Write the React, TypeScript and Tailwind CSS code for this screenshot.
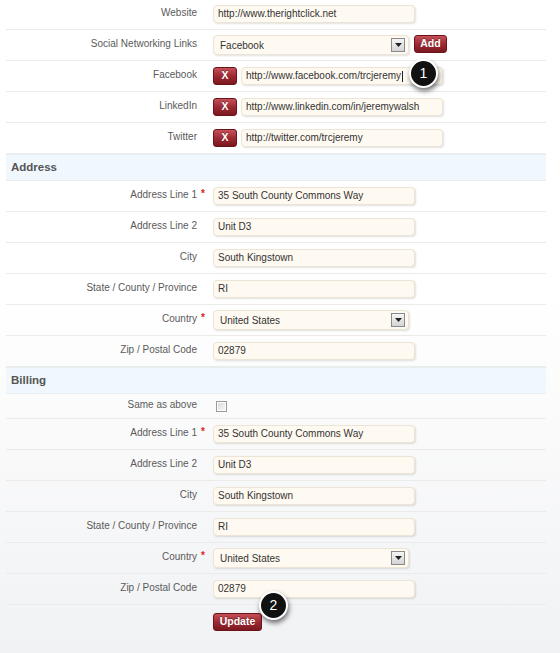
import React from 'react'

const inputCls =
  'h-[18px] w-[202px] rounded-[4px] border border-[#ece5d6] bg-[#fffaf1] px-[4px] text-[10px] leading-[16px] text-[#333] shadow-[1px_1px_2px_rgba(0,0,0,0.12)] outline-none'

function Row({
  label,
  required,
  children,
  h = 'h-[31px]',
}: {
  label: string
  required?: boolean
  children: React.ReactNode
  h?: string
}) {
  return (
    <div className={`flex items-center border-b border-[#ebebeb] ${h}`}>
      <span className="w-[191px] shrink-0 pb-[3px] text-right text-[10px] text-[#5a5a5a]">{label}</span>
      <span className="w-[16px] shrink-0 pb-[5px] pl-[4px] text-[10px] font-bold text-[#d22]">
        {required ? '*' : ''}
      </span>
      <div className="flex items-center">{children}</div>
    </div>
  )
}

function Section({ title }: { title: string }) {
  return (
    <div className="flex h-[27px] items-center border-y border-[#e6eef2] bg-[#f0f8fd] px-[5px] text-[11.5px] font-bold text-[#555]">
      {title}
    </div>
  )
}

function TextInput({ value, cursor }: { value: string; cursor?: boolean }) {
  return (
    <div className={`${inputCls} flex items-center`}>
      <span>{value}</span>
      {cursor && <span className="ml-[1px] h-[11px] w-px bg-[#222]" />}
    </div>
  )
}

function Select({ value }: { value: string }) {
  return (
    <div className="flex h-[20px] w-[196px] items-center justify-between rounded-[4px] border border-[#ece5d6] bg-[#fffaf1] pl-[6px] pr-[3px] text-[10px] text-[#333] shadow-[1px_1px_2px_rgba(0,0,0,0.12)]">
      <span>{value}</span>
      <span className="flex h-[14px] w-[14px] items-center justify-center border border-[#8a8a8a] bg-linear-to-b from-[#f6f6f6] to-[#d4d4d4]">
        <svg width="7" height="4" viewBox="0 0 7 4">
          <path d="M0 0h7L3.5 4z" fill="#222" />
        </svg>
      </span>
    </div>
  )
}

function RedButton({ children, w }: { children: React.ReactNode; w: string }) {
  return (
    <button
      className={`flex h-[18px] ${w} items-center justify-center rounded-[3px] border border-[#6e1219] bg-linear-to-b from-[#c4505a] via-[#9e2a33] to-[#7b1820] text-[10.5px] font-bold text-white [text-shadow:0_-1px_0_rgba(0,0,0,0.35)]`}
    >
      {children}
    </button>
  )
}

function Badge({ n, className }: { n: number; className: string }) {
  return (
    <div
      className={`absolute flex h-[29px] w-[29px] items-center justify-center rounded-full border-2 border-white bg-[#111] text-[14px] text-white shadow-[1px_3px_5px_rgba(0,0,0,0.55)] ${className}`}
    >
      {n}
    </div>
  )
}

function AddressFields() {
  return (
    <>
      <Row label="Address Line 1" required>
        <TextInput value="35 South County Commons Way" />
      </Row>
      <Row label="Address Line 2">
        <TextInput value="Unit D3" />
      </Row>
      <Row label="City">
        <TextInput value="South Kingstown" />
      </Row>
      <Row label="State / County / Province">
        <TextInput value="RI" />
      </Row>
      <Row label="Country" required>
        <Select value="United States" />
      </Row>
      <Row label="Zip / Postal Code">
        <TextInput value="02879" />
      </Row>
    </>
  )
}

export default function App() {
  return (
    <div className="relative h-[653px] w-[560px] overflow-hidden bg-linear-to-b from-white via-white via-45% to-[#f1f2f4] font-['Liberation_Sans',Arial,sans-serif]">
      <div className="-mt-[1px] ml-[6px] w-[540px]">
        <Row label="Website">
          <TextInput value="http://www.therightclick.net" />
        </Row>
        <Row label="Social Networking Links">
          <div className="flex items-center gap-[5px]">
            <Select value="Facebook" />
            <div className="-mt-[2px]">
              <RedButton w="w-[33px]">Add</RedButton>
            </div>
          </div>
        </Row>
        <Row label="Facebook">
          <div className="flex items-center gap-[4px]">
            <RedButton w="w-[24px]">X</RedButton>
            <TextInput value="http://www.facebook.com/trcjeremy" cursor />
          </div>
        </Row>
        <Row label="LinkedIn">
          <div className="flex items-center gap-[4px]">
            <RedButton w="w-[24px]">X</RedButton>
            <TextInput value="http://www.linkedin.com/in/jeremywalsh" />
          </div>
        </Row>
        <Row label="Twitter">
          <div className="flex items-center gap-[4px]">
            <RedButton w="w-[24px]">X</RedButton>
            <TextInput value="http://twitter.com/trcjeremy" />
          </div>
        </Row>

        <Section title="Address" />
        <AddressFields />

        <Section title="Billing" />
        <Row label="Same as above" h="h-[25px]">
          <span className="ml-[3px] mt-[1px] h-[11px] w-[11px] border border-[#9a9a9a] bg-linear-to-br from-[#d8d8d8] to-[#fafafa] shadow-[inset_0_0_0_1px_#fff]" />
        </Row>
        <AddressFields />

        <div className="flex pt-[8px] pl-[207px]">
          <RedButton w="w-[49px]">Update</RedButton>
        </div>
      </div>

      <Badge n={1} className="left-[409px] top-[59px]" />
      <Badge n={2} className="left-[259px] top-[591px]" />
    </div>
  )
}
